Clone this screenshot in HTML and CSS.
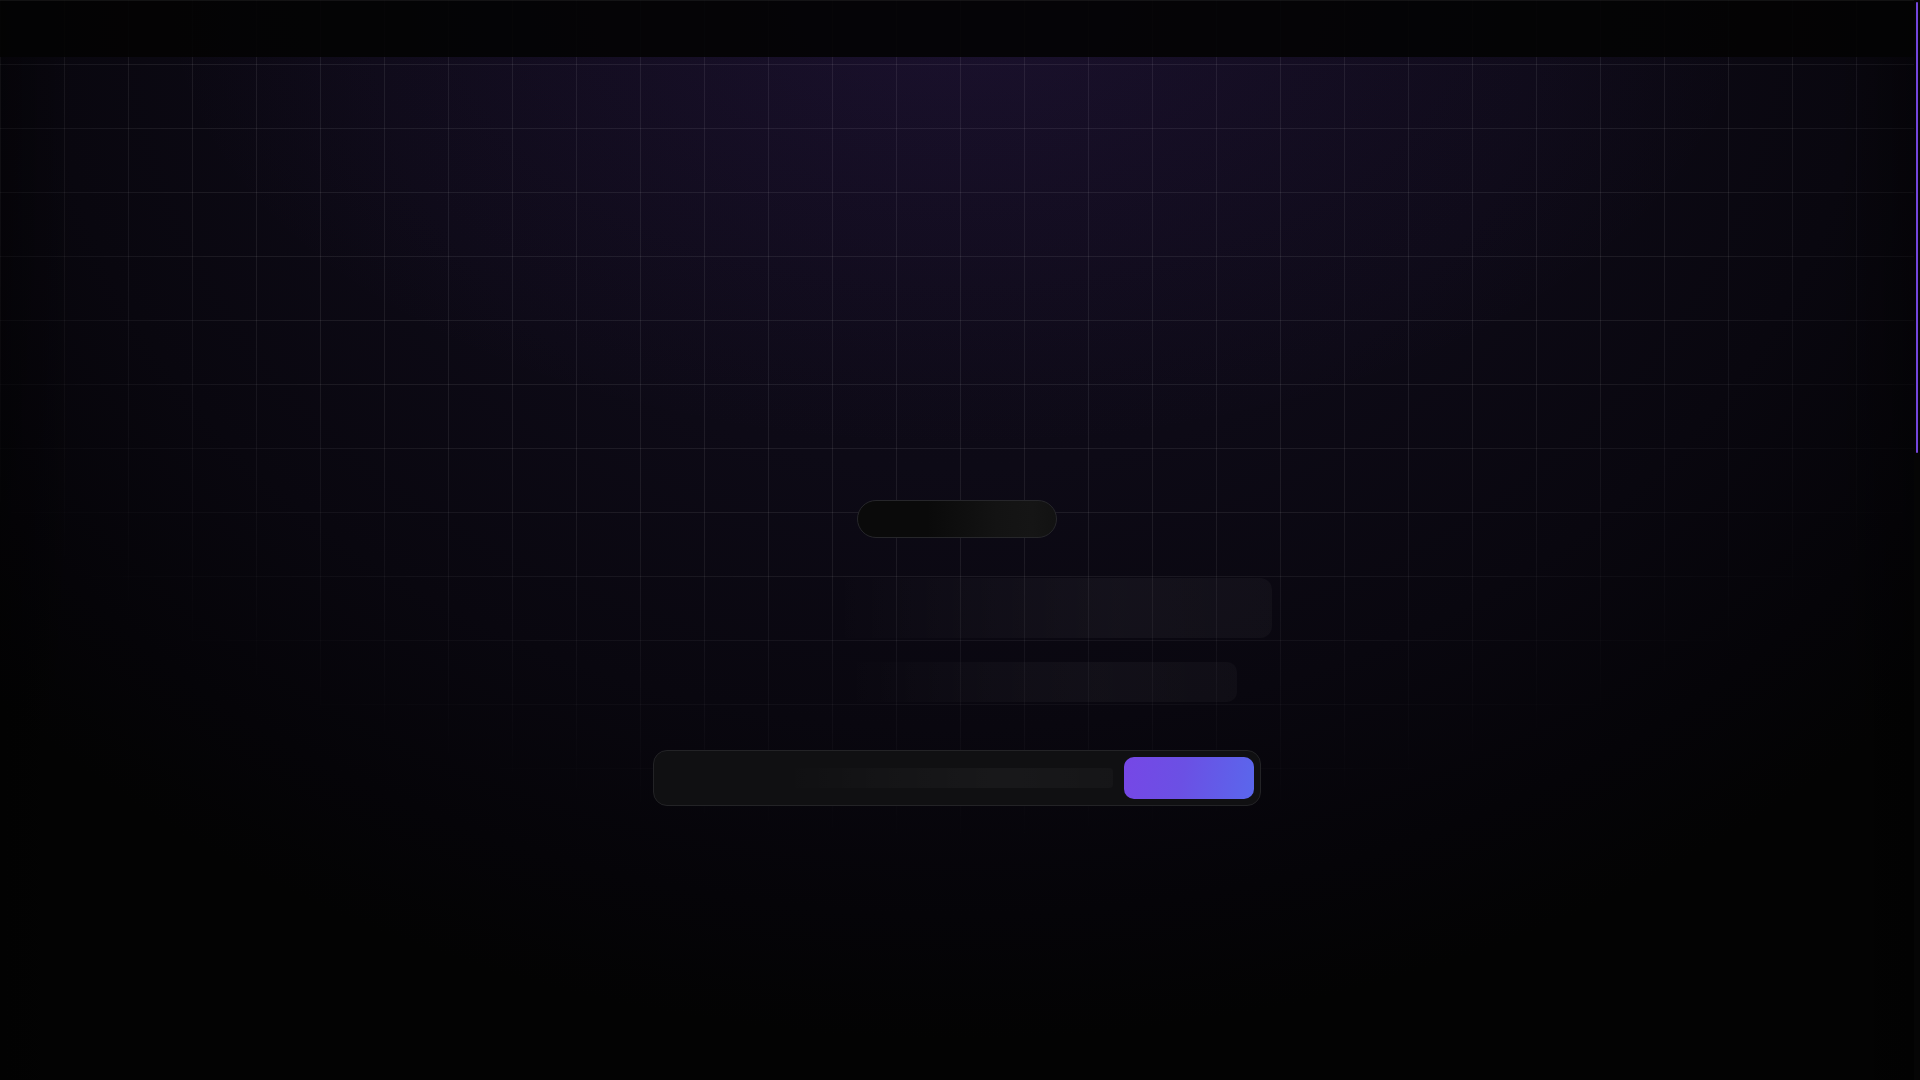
FILE: index.html
```html
<!DOCTYPE html>
<html lang="en">
<head>
<meta charset="utf-8">
<title>Loading</title>
<link rel="stylesheet" href="styles.css">
</head>
<body>
  <div class="app">
    <header class="topbar" aria-label="Site header"></header>
    <main>
      <section class="hero">
        <div class="hero-content">
          <div class="skel-badge"></div>
          <div class="skel-title"></div>
          <div class="skel-subtitle"></div>
          <div class="search">
            <div class="skel-input"></div>
            <button class="search-btn" type="button" aria-label="Submit"></button>
          </div>
        </div>
      </section>
      <section class="below"></section>
    </main>
  </div>
  <div class="scroll-rail" aria-hidden="true">
    <div class="scroll-thumb"></div>
  </div>
</body>
</html>
```
FILE: styles.css
```css
html,
body {
  margin: 0;
  height: 100%;
  overflow: hidden;
  background: #030303;
}
body {
  display: flex;
  font-family: Inter, "Liberation Sans", sans-serif;
  color: #fff;
}
.app {
  position: relative;
  flex: 1;
  min-width: 0;
  height: 100vh;
  overflow-y: auto;
  background: #030303;
}
.app::-webkit-scrollbar {
  width: 0;
}
.scroll-rail {
  width: 6px;
  flex: none;
  height: 100vh;
  background: #050505;
  padding: 2px;
  box-sizing: border-box;
}
.scroll-thumb {
  height: 451px;
  border-radius: 2px;
  background: #7446dd;
}
.topbar {
  position: fixed;
  top: 0;
  left: 0;
  right: 6px;
  height: 56px;
  z-index: 10;
  background: rgba(3, 3, 3, 0.9);
  border-top: 1px solid rgba(255, 255, 255, 0.06);
}
.hero {
  position: relative;
  min-height: 100vh;
  box-sizing: border-box;
  padding: 500px 24px 0;
  background:
    linear-gradient(90deg, rgba(0, 0, 0, 0.35) 0, transparent 4%, transparent 96%, rgba(0, 0, 0, 0.35) 100%),
    radial-gradient(800px 450px at 50% 0, rgba(120, 60, 210, 0.10), transparent 100%),
    radial-gradient(1300px 1040px at 50% 0, #100c1b 0%, #0d0a16 45%, #09070f 70%, #050408 88%, #030303 100%);
  overflow: hidden;
}
.hero::before {
  content: "";
  position: absolute;
  inset: 0;
  background-image:
    linear-gradient(to right, rgba(255, 255, 255, 0.075) 1px, transparent 1px),
    linear-gradient(to bottom, rgba(255, 255, 255, 0.075) 1px, transparent 1px);
  background-size: 64px 64px;
  -webkit-mask-image: radial-gradient(1300px 900px at 50% 0, #000 0%, #000 62%, transparent 95%);
  mask-image: radial-gradient(1300px 900px at 50% 0, #000 0%, #000 62%, transparent 95%);
  pointer-events: none;
}
.hero-content {
  position: relative;
  display: flex;
  flex-direction: column;
  align-items: center;
}
.skel-badge {
  width: 200px;
  height: 38px;
  box-sizing: border-box;
  border-radius: 999px;
  border: 1px solid #26262a;
  background: linear-gradient(90deg, #0a0a0a 0%, #0a0a0a 35%, #131313 70%, #151515 88%, #121212 100%);
  margin-bottom: 40px;
}
.skel-title {
  width: 630px;
  height: 60px;
  border-radius: 12px;
  background: linear-gradient(90deg, rgba(255, 255, 255, 0) 0%, rgba(255, 255, 255, 0) 30%, rgba(255, 255, 255, 0.025) 55%, rgba(255, 255, 255, 0.04) 75%, rgba(255, 255, 255, 0.03) 100%);
  margin-bottom: 24px;
}
.skel-subtitle {
  width: 560px;
  height: 40px;
  border-radius: 10px;
  background: linear-gradient(90deg, rgba(255, 255, 255, 0) 0%, rgba(255, 255, 255, 0) 30%, rgba(255, 255, 255, 0.025) 55%, rgba(255, 255, 255, 0.035) 75%, rgba(255, 255, 255, 0.028) 100%);
  margin-bottom: 48px;
}
.search {
  width: 608px;
  height: 56px;
  box-sizing: border-box;
  display: flex;
  align-items: center;
  gap: 11px;
  padding: 6px 6px 6px 20px;
  border: 1px solid #232326;
  border-radius: 14px;
  background: #101012;
}
.skel-input {
  flex: 1;
  height: 20px;
  border-radius: 4px;
  background: linear-gradient(90deg, rgba(255, 255, 255, 0) 0%, rgba(255, 255, 255, 0) 25%, rgba(255, 255, 255, 0.02) 50%, rgba(255, 255, 255, 0.035) 75%, rgba(255, 255, 255, 0.025) 100%);
}
.search-btn {
  width: 130px;
  height: 42px;
  border: 0;
  padding: 0;
  border-radius: 10px;
  background: linear-gradient(100deg, #7647e6 0%, #6b50e4 45%, #5a67ec 100%);
  cursor: pointer;
}
.below {
  height: 1484px;
  background: #030303;
}
```
